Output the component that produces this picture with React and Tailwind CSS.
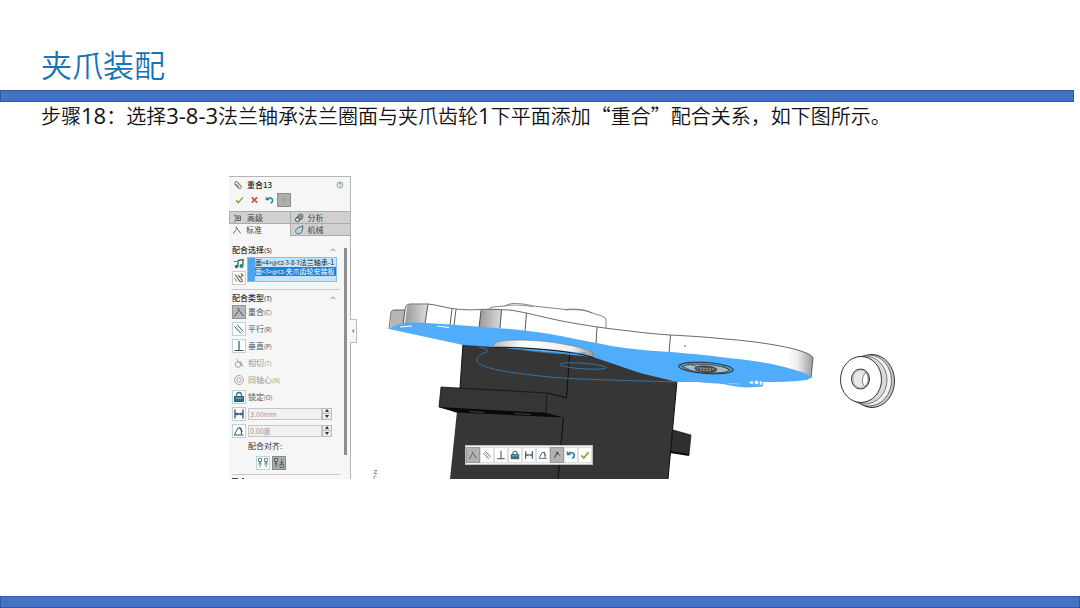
import React, { useState } from 'react';

const Icon = ({ children, className = 'w-3 h-3' }) => (
    <svg viewBox="0 0 12 12" className={className} fill="none" stroke="#3c4f57" strokeWidth="1" aria-hidden="true">
        {children}
    </svg>
);

const icons = {
    coincident: <Icon><path d="M1.5 10.5 5 5.5M5 2l1 2.5 4.5 5.5" /><path d="M4 4h3" stroke="#6f8a94" /></Icon>,
    parallel: <Icon><path d="M1.5 3.5 8 10.500M4 1.500l6.500 7" stroke="#2f5f6c" /><path d="M3 3l6.500 7" stroke="#8fc1cc" strokeWidth=".6" /></Icon>,
    perpendicular: <Icon><path d="M6 1v9.500M1.500 10.500h9" stroke="#2b5560" strokeWidth="1.200" /></Icon>,
    tangent: <Icon><circle cx="5" cy="7.500" r="2.800" stroke="#999" /><path d="M3 1.500 5.500 5l4.500 4.500M7 4l3 5" stroke="#aaa" /></Icon>,
    concentric: <Icon><circle cx="6" cy="6" r="4.500" stroke="#a8a8a8" /><circle cx="6" cy="6" r="2.200" stroke="#a8a8a8" /></Icon>,
    lock: <Icon><path d="M3.500 6V4a2.500 2.500 0 0 1 5 0v2" stroke="#4a7383" strokeWidth="1.300" /><path d="M1.500 5.500h9v5h-9z" fill="#2e6f8e" stroke="#28566b" /><path d="M2.500 7h7" stroke="#8ec4d8" /></Icon>,
    distance: <Icon><path d="M2 1.500v9M10 1.500v9M2 6h8" stroke="#2b4a55" strokeWidth="1.300" /><path d="M4.500 4.500 3 6l1.500 1.500M7.500 4.500 9 6 7.500 7.500" strokeWidth=".8" /></Icon>,
    angle: <Icon><path d="M1 10h9.500M1.500 9.500 5 3h3l.5 6.500M6.500 2.500 9.500 7" stroke="#33525c" /></Icon>,
    flip: <Icon><path d="M3 9 6 4l3 2M5 3h2.500" stroke="#333" strokeWidth="1.200" /></Icon>,
    undo: <Icon><path d="M1.500 1.500v4h4" stroke="#2c7d9c" strokeWidth="1.400" /><path d="M2 5c3-3 8-2 8 1.500 0 2-1 3-2.500 3.500" stroke="#2c7d9c" strokeWidth="2" /></Icon>,
    check: <Icon><path d="M1.500 6.500 4.500 9.500 10.500 2.500" stroke="#7fae35" strokeWidth="2" /></Icon>,
    cross: <Icon><path d="M2.500 2.500l7 7M9.500 2.500l-7 7" stroke="#cc4438" strokeWidth="2" /></Icon>,
    pin: <Icon><path d="M4.500 7.500 7.500 4" stroke="#888" /></Icon>,
    clip: <Icon><path d="M1.500 4.500l5 5.500c2 1.500 4.500-.5 3-3L5 2c-1.500-1-3.500.5-2.500 2.500L7 9M4 5l3.500 4M4 2l6 6" stroke="#666" /></Icon>,
    help: <Icon><circle cx="6" cy="6" r="4.500" stroke="#557d91" /><path d="M4.500 4.800c0-2 3-2 3 0C7.500 6 6 6 6 7.200M6 8v1" stroke="#3c6479" /></Icon>,
    advanced: <Icon><path d="M3.500 3.500h5.500v5.500H3.500zM1 11l2.500-2M1 2.500h2.500" stroke="#555" /><circle cx="6.200" cy="6.200" r="1.200" /></Icon>,
    analysis: <Icon><circle cx="4" cy="8" r="2.500" /><circle cx="8" cy="4" r="2.800" /><circle cx="8" cy="4" r="1" /><path d="M2.500 6 6 2.500M6 10l4-4" /></Icon>,
    mechanical: <Icon><path d="M2 7.500C2 4 6.500 3 10.500 1c0 4 0 6.500-2.500 8.500-3 2-6 1-6-2z" stroke="#2f7393" strokeWidth="1.200" /></Icon>,
    entities: <Icon><path d="M5 2.500l5-1v5.500M5 2.500v6" stroke="#2e6b55" strokeWidth="1.300" /><circle cx="3.500" cy="8.500" r="1.700" fill="#2c6c8c" stroke="none" /><circle cx="8.500" cy="8" r="2" fill="#337f72" stroke="none" /><path d="M1 3.500h3" stroke="#3b82a0" /></Icon>,
    multi: <Icon><path d="M2 2.500l5 7c1.500 1 3-.5 2-2L5 3M8 1.500l2 2-3 2" stroke="#736b50" strokeWidth="1.200" /><path d="M1.500 6 4 10" stroke="#a88b42" /></Icon>,
    aligned: <Icon><path d="M1.500 1.500h3v3h-3zM7.500 1.500h3v3h-3zM3 5v5.500M9 5v5.500M1.500 7.500 3 5l1.500 2.500M7.500 7.500 9 5l1.500 2.500" stroke="#466a73" strokeWidth=".8" /></Icon>,
    antiAligned: <Icon><path d="M1.500 1.500h3v3h-3zM7 7.500h3.500v3H7zM3 5v5.500M8.800 7V1.500M1.500 7.500 3 5l1.500 2.500M7.300 4.500 8.800 7l1.700-2.500" stroke="#3d565d" strokeWidth=".8" /></Icon>,
};

const mateTypes = [
    { id: 'coincident', label: '重合', hotkey: '(C)' },
    { id: 'parallel', label: '平行', hotkey: '(R)' },
    { id: 'perpendicular', label: '垂直', hotkey: '(P)' },
    { id: 'tangent', label: '相切', hotkey: '(T)', disabled: true },
    { id: 'concentric', label: '同轴心', hotkey: '(N)', disabled: true },
    { id: 'lock', label: '锁定', hotkey: '(O)' },
];

const toolbarItems = ['coincident', 'parallel', 'perpendicular', 'lock', 'distance', 'angle', 'flip', 'undo', 'check'];

const tabs = [
    { id: 'advanced', label: '高级' },
    { id: 'analysis', label: '分析' },
    { id: 'standard', label: '标准', icon: 'coincident' },
    { id: 'mechanical', label: '机械' },
];

const GroupTitle = ({ label, hotkey }) => (
    <div className="flex items-center justify-between h-[11px] pr-1 text-[#333]">
        <h3 className="text-[8px] font-medium">{label}<span className="text-[6px]">{hotkey}</span></h3>
        <svg viewBox="0 0 8 5" className="w-[6px] h-1" fill="none" stroke="#666"><path d="M1 4l3-3 3 3" /></svg>
    </div>
);

const NumberRow = ({ icon, name, value }) => (
    <div className="flex items-center gap-0.5 h-[17px]">
        <span className="w-3.5 h-3.5 flex items-center justify-center bg-white border border-[#b9d5dc]">{icons[icon]}</span>
        <input aria-label={name} defaultValue={value} className="w-[74px] h-3 px-px bg-[#f1f1f1] border border-[#c6c6c6] text-[7px] text-[#999]" />
        <span className="-ml-0.5 w-2.5 h-3 flex flex-col border border-[#bbb] bg-[#ececec]">
            <button aria-label="增加" className="flex-1 flex items-center justify-center"><svg viewBox="0 0 4 3" className="w-1 h-[3px]"><path d="M0 3l2-3 2 3z" fill="#333" /></svg></button>
            <button aria-label="减少" className="flex-1 flex items-center justify-center border-t border-[#bbb]"><svg viewBox="0 0 4 3" className="w-1 h-[3px]"><path d="M0 0l2 3 2-3z" fill="#333" /></svg></button>
        </span>
    </div>
);

const MatePanel = ({ mate, setMate }) => (
    <aside className="w-[122px] h-[303px] shrink-0 overflow-hidden bg-[#f6f6f6] border-t border-r border-[#b5b5b5]">
        <div className="flex items-center justify-between h-4 pl-1 pr-1.5">
            <h2 className="flex items-center gap-1 text-[8px] font-medium text-[#222]">
                <span className="w-2.5 flex">{icons.clip}</span>重合13
            </h2>
            <button aria-label="帮助" className="w-2 flex">{icons.help}</button>
        </div>
        <div className="flex items-center h-3.5 pl-[3px]">
            <button aria-label="确定" className="w-[15px] px-[3px] flex">{icons.check}</button>
            <button aria-label="取消" className="w-[15px] px-[3px] flex">{icons.cross}</button>
            <button aria-label="撤销" className="w-[15px] px-[3px] flex">{icons.undo}</button>
            <button aria-label="固定" className="w-3.5 h-3.5 flex items-center justify-center bg-[#adadad] border border-[#8c8c8c]">{icons.pin}</button>
        </div>
        <div className="grid grid-cols-2 mt-1 border-t border-[#aaa]">
            {tabs.map((tab) => (
                <button
                    key={tab.id}
                    className={`flex items-center gap-1 h-3 pl-[3px] text-[8px] text-[#444] ${tab.id === 'standard' ? 'bg-[#f6f6f6]' : 'bg-[#d0d0d0] border-b border-l border-[#aaa]'}`}
                >
                    <span className="w-2.5 flex">{icons[tab.icon || tab.id]}</span>{tab.label}
                </button>
            ))}
        </div>
        <div className="flex pl-[3px] pt-2">
            <div className="w-[108px]">
                <GroupTitle label="配合选择" hotkey="(S)" />
                <div className="flex gap-px pt-0.5">
                    <div className="w-3.5 flex flex-col items-center">
                        <span className="h-3.5 flex items-center">{icons.entities}</span>
                        <button aria-label="多配合" className="w-3.5 h-3.5 flex items-center justify-center bg-white border border-[#ccc]">{icons.multi}</button>
                    </div>
                    <div className="w-[90px] h-[25px] flex border border-[#8bbfe6] bg-[#c4e5fb]">
                        <div className="w-[7px] shrink-0 bg-[#4da3ee]" />
                        <ul className="flex-1 overflow-hidden whitespace-nowrap text-[7px] leading-[9px] text-[#222]">
                            <li>面<span className="text-[6px]">&lt;4&gt;@cz-3-8-3</span>法兰轴承-1</li>
                            <li className="bg-[#1b7fdc] text-white">面<span className="text-[6px]">&lt;3&gt;@cz-</span>夹爪齿轮安装板</li>
                        </ul>
                    </div>
                </div>
                <div className="mt-1 pt-0.5 border-t border-[#c8c8c8]">
                    <GroupTitle label="配合类型" hotkey="(T)" />
                </div>
                {mateTypes.map((type) => (
                    <button
                        key={type.id}
                        disabled={type.disabled}
                        onClick={() => setMate(type.id)}
                        className={`flex items-center gap-0.5 w-full h-[17px] text-[8px] ${type.disabled ? 'text-[#999]' : 'text-[#555]'}`}
                    >
                        <span className={`w-3.5 h-3.5 flex items-center justify-center border ${type.disabled ? 'border-transparent' : mate === type.id ? 'bg-[#b4b6b8] border-[#8f9496]' : 'bg-white border-[#b9d5dc]'}`}>
                            {icons[type.id]}
                        </span>
                        <span>{type.label}<span className="text-[6px]">{type.hotkey}</span></span>
                    </button>
                ))}
                <NumberRow icon="distance" name="距离" value="3.00mm" />
                <NumberRow icon="angle" name="角度" value="0.00度" />
                <p className="pl-4 text-[8px] leading-[13px] text-[#333]">配合对齐:</p>
                <div className="flex gap-0.5 pl-6 pt-1">
                    <button aria-label="同向对齐" className="w-3.5 h-3.5 flex items-center justify-center bg-white border border-[#b9d5dc]">{icons.aligned}</button>
                    <button aria-label="反向对齐" className="w-3.5 h-3.5 flex items-center justify-center bg-[#adb0b0] border border-[#888]">{icons.antiAligned}</button>
                </div>
                <div className="mt-1 pt-[3px] border-t border-[#c8c8c8]">
                    <svg viewBox="0 0 14 2" className="w-3.5 h-0.5" fill="none" stroke="#444"><path d="M0 .5h6M8 1.500h1M10 .5h2" /></svg>
                </div>
            </div>
            <div className="w-[3px] h-[207px] mt-1 ml-1 bg-[#8f8f8f]" />
        </div>
    </aside>
);

const ModelView = () => (
    <svg viewBox="370 295 530 183" className="block w-full" strokeLinejoin="round" role="img" aria-label="装配模型">
        <defs>
            <linearGradient id="plateEnd" x1="0" x2="1">
                <stop offset="0" stopColor="#fff" />
                <stop offset=".4" stopColor="#eee" />
                <stop offset="1" stopColor="#999" />
            </linearGradient>
            <linearGradient id="shade" x1="0" x2="1">
                <stop offset="0" stopColor="#999" />
                <stop offset="1" stopColor="#dcdcdc" />
            </linearGradient>
            <linearGradient id="ring" x1="0" x2="1">
                <stop offset="0" stopColor="#bbb" />
                <stop offset=".3" stopColor="#fff" />
                <stop offset=".8" stopColor="#eee" />
                <stop offset="1" stopColor="#999" />
            </linearGradient>
        </defs>

        {/* housing */}
        <path d="M673 429l18 5-2 20-19-3z" fill="#303030" stroke="#111" strokeWidth=".7" />
        <path d="M670 450l19 3v2l-19-3z" fill="#0c0c0c" />
        <path d="M463 343l-3 44-3 23-7 68h218l9-98-60-30-60-10z" fill="#363636" />
        <path d="M441 386l106 6-1 20-90-2-17-4z" fill="#353535" stroke="#111" strokeWidth=".8" />
        <path d="M439 406l107 6 18 4.500-108-5z" fill="#0a0a0a" />
        <path d="M470 410.500l14 1M515 412.500l16 1" stroke="#444" strokeWidth="1" />
        <path d="M570 349l-3.500 48-19-5M563.500 416.500 558 478M463 343l-3 44M677 380l-9 98" fill="none" stroke="#0d0d0d" strokeWidth="1" />

        {/* boss on top of the plate */}
        <path d="M488 310q0-3 5-4l12-1q2-2 8-2.500c8 0 15 1 20 2.500l33 3.500c8-1 20 0 25 3l12 4q3 1 3 4v9l-70-8z" fill="#fff" stroke="#666" strokeWidth=".8" />
        <path d="M505 305c5-1.500 22-1 28 1M565 309c7-1 22 0 27 3" fill="none" stroke="#666" strokeWidth=".7" />

        {/* plate edge */}
        <path d="M389 328l2-17q1-2 3-2h11l1-4q1-2 4-2h18c10 1 18 4 28 5 10 1 16 1 24 .5C492 308 504 308.500 513 309.500C530 312 545 317 562 320C585 324.500 610 328 630 330C645 332 655 333 670 334C690 335 705 336 720 337.500C745 339.500 768 342 790 347C800 349.500 812 353 813 357L811 377 700 370 480 335z" fill="#fff" />
        <path d="M391.500 311q1-2 3-2H405l-2 15-13 4z" fill="#b5b5b5" />
        <path d="M407 305q1-1.500 3-1.500h18l-3 19h-20z" fill="url(#shade)" />
        <path d="M481 309q10-1 21-.5l-2 19h-21z" fill="url(#shade)" />
        <path d="M789 346.800C800 349.500 812 353 813 357L811 377 787 369z" fill="url(#plateEnd)" />
        <path d="M389 328l2-17q1-2 3-2h11l1-4q1-2 4-2h18c10 1 18 4 28 5 10 1 16 1 24 .5C492 308 504 308.500 513 309.500C530 312 545 317 562 320C585 324.500 610 328 630 330C645 332 655 333 670 334C690 335 705 336 720 337.500C745 339.500 768 342 790 347C800 349.500 812 353 813 357L811 377" fill="none" stroke="#444" strokeWidth=".8" />
        <path d="M405 309l-2 15M428 303.500l-3 19M452 308l-2 16M456 308.500l-2 16M481 309.500l-2 17M501.500 309l-1.500 18M526.500 312l-1.500 18M597 326l-1 17M670.500 334l-1.500 18" stroke="#333" strokeWidth=".8" />

        {/* selected bottom face */}
        <path d="M389 328C393 326 399 322 409 321.500C440 322 480 326 510 328C524 329 537 331 550 333C567 336 580 339 597 342C607 344 615 346 625 347C640 349 655 350 670 351C690 352.500 705 354 720 356C735 357.500 747 359 760 361C780 364.500 798 369 811 375Q811 378 806 379C792 381 778 381 763 381v4.500C755 386 747 387 740 386C730 385 725 382.500 715 382.500C700 381 690 381 677 381L640 372 593 356 494 346 463 344z" fill="#4fadfc" />
        <path d="M400 326l12-1M437 325l12 1.500" stroke="#fff" strokeWidth="1" fill="none" />

        {/* flange ring */}
        <path d="M494 342.500C500 338 525 339 540 340C560 342 582 346 593 351v5C575 349 520 346 494 346z" fill="url(#ring)" stroke="#777" strokeWidth=".5" />
        <path d="M494 346.500c20-1 79 3 99 10" fill="none" stroke="#111" strokeWidth="1" />

        {/* hidden edges */}
        <path d="M479 346c9 2 9 3 8 5-6 2-11 5-10 9 2 8 42 13 73 16 32 3 70 3 127 5M514 347c25 5 45 6 72 5" fill="none" stroke="#397eb6" strokeWidth=".8" />
        <ellipse cx="583" cy="365" rx="23" ry="2.800" transform="rotate(4 583 365)" fill="none" stroke="#397eb6" strokeWidth=".8" />

        {/* bearing seat in the face */}
        <g transform="rotate(4 706 367)">
            <ellipse cx="706" cy="367" rx="27.500" ry="5.500" fill="#5a9bca" stroke="#222" strokeWidth=".9" />
            <ellipse cx="706" cy="367.500" rx="23" ry="4" fill="#a3bdcc" stroke="#333" strokeWidth=".7" />
            <ellipse cx="706" cy="368" rx="11" ry="3" fill="#555" stroke="#222" strokeWidth=".7" />
            <path d="M697 367.500h18M700 369.500h12M684 367h10M718 367h9" stroke="#bbb" strokeWidth=".7" strokeDasharray="2 1" />
            <path d="M680 366l10 4M722 364l9 4M688 364l8 2" stroke="#333" strokeWidth=".6" />
        </g>
        <path d="M728 382.500l12 .5M750 380.500h3v2h-3zM755 380h3v3h-3zM760 380.500h2v3h-2z" fill="#fff" stroke="#d6edff" strokeWidth=".5" />
        <path d="M684 345h2" stroke="#4fadfc" strokeWidth="1.500" />

        {/* loose flange bearing */}
        <g stroke="#333" strokeWidth="1">
            <ellipse cx="872" cy="380" rx="22.500" ry="26.500" fill="#c9c9c9" />
            <ellipse cx="869" cy="379.500" rx="22.500" ry="25.500" fill="#f3f3f3" strokeWidth=".7" />
            <ellipse cx="865" cy="379" rx="22" ry="24" fill="#d8d8d8" strokeWidth=".6" />
            <ellipse cx="861" cy="378.500" rx="20.500" ry="23" fill="#fff" />
            <ellipse cx="860.500" cy="378" rx="9" ry="10" fill="#e8e8e8" />
            <path d="M866 371c-4 4-5 11-1 15 4-3 5-11 1-15z" fill="#fff" strokeWidth=".6" />
            <ellipse cx="860.500" cy="378" rx="7.500" ry="9" fill="none" stroke="#777" strokeWidth=".5" />
        </g>
        <path d="M374 469.500h3l-3 3h3M374 478v-2.500q1-1 2.500-.5" fill="none" stroke="#777" strokeWidth=".8" />
    </svg>
);

const Num = ({ children }) => <span className="font-['Open_Sans',sans-serif] text-[22px] font-normal">{children}</span>;

const App = () => {
    const [mate, setMate] = useState('coincident');

    return (
        <div className="min-h-screen flex flex-col bg-white font-['Noto_Sans_CJK_SC',sans-serif]">
            <h1 className="pt-[46px] px-[41px] text-[31px] leading-9 font-[350] text-[#1673b5]">夹爪装配</h1>
            <div className="mt-2 mr-1.5 h-3 bg-[#4472c4] border border-[#34599c]" />
            <p className="px-[41px] text-xl leading-[26px] font-[350] text-[#111]">
                步骤<Num>18</Num>：选择<Num>3-8-3</Num>法兰轴承法兰圈面与夹爪齿轮<Num>1</Num>下平面添加“重合”配合关系，如下图所示。
            </p>
            <main className="mt-[47px] pl-[229px] pr-[180px] flex items-start">
                <MatePanel mate={mate} setMate={setMate} />
                <button aria-label="收起面板" className="-ml-px mt-[143px] w-[7px] h-6 shrink-0 flex items-center justify-center bg-[#f6f6f6] border border-l-0 border-[#bbb]">
                    <svg viewBox="0 0 4 4" className="w-1 h-1"><path d="M3 0v4L1 2z" fill="#777" /></svg>
                </button>
                <div className="relative flex-1 self-end ml-[13px]">
                    <ModelView />
                    <div className="absolute left-[95px] bottom-3.5 h-5 flex items-center bg-[#f3f3f3] border border-[#bdbdbd]">
                        {toolbarItems.map((item) => (
                            <button
                                key={item}
                                aria-label={item}
                                className={`w-3.5 h-4 flex items-center justify-center border ${item === mate || item === 'flip' ? 'bg-[#b3b3b3] border-[#999]' : 'bg-white border-[#dedede]'}`}
                            >
                                <span className="w-2.5 flex">{icons[item]}</span>
                            </button>
                        ))}
                    </div>
                </div>
            </main>
            <div className="mt-auto h-3 bg-[#4472c4] border border-[#34599c]" />
        </div>
    );
};

export default App;
